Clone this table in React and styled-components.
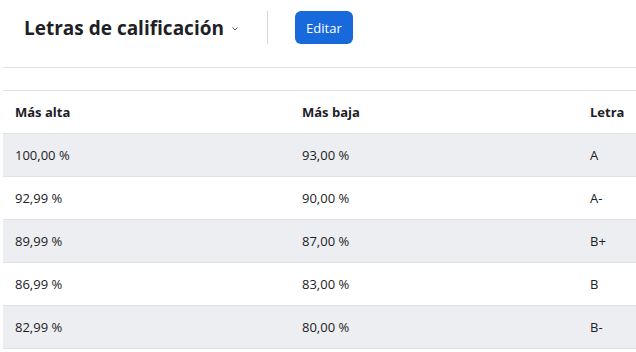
import React from 'react';
import styled, { createGlobalStyle } from 'styled-components';

const GlobalStyle = createGlobalStyle`
  body {
    margin: 0;
    background: #fff;
    font-family: "Open Sans", "Noto Sans", sans-serif;
    color: #1d2125;
  }
`;

const rows = [
  { high: '100,00 %', low: '93,00 %', letter: 'A' },
  { high: '92,99 %', low: '90,00 %', letter: 'A-' },
  { high: '89,99 %', low: '87,00 %', letter: 'B+' },
  { high: '86,99 %', low: '83,00 %', letter: 'B' },
  { high: '82,99 %', low: '80,00 %', letter: 'B-' },
];

export default function App() {
  return (
    <PageSt>
      <GlobalStyle />
      <HeaderSt>
        <TitleSt>
          Letras de calificación
          <svg width="8" height="8" viewBox="0 0 8 8">
            <path d="M1.5 2.5 L4 5 L6.5 2.5" fill="none" stroke="#495057" strokeWidth="1" />
          </svg>
        </TitleSt>
        <DividerSt />
        <ButtonSt>Editar</ButtonSt>
      </HeaderSt>
      <SpacerSt />
      <TableSt>
        <thead>
          <tr>
            <ThSt>Más alta</ThSt>
            <ThSt>Más baja</ThSt>
            <ThSt>Letra</ThSt>
          </tr>
        </thead>
        <tbody>
          {rows.map((r, i) => (
            <RowSt key={i} $striped={i % 2 === 0}>
              <TdSt>{r.high}</TdSt>
              <TdSt>{r.low}</TdSt>
              <TdSt>{r.letter}</TdSt>
            </RowSt>
          ))}
        </tbody>
      </TableSt>
    </PageSt>
  );
}

const PageSt = styled.div`
  width: 636px;
  padding-left: 3px;
  box-sizing: border-box;
`;

const HeaderSt = styled.div`
  display: flex;
  align-items: flex-start;
  height: 68px;
  padding: 11px 0 0 21px;
  box-sizing: border-box;
  border-bottom: 1px solid #dee2e6;
`;

const TitleSt = styled.h2`
  margin: 0;
  height: 33px;
  display: flex;
  align-items: center;
  gap: 7px;
  font-size: 19px;
  font-weight: 700;
  color: #1d2125;
  svg {
    margin-top: 3px;
  }
`;

const DividerSt = styled.div`
  width: 1px;
  height: 33px;
  background: #ced4da;
  margin: 0 27px 0 28px;
`;

const ButtonSt = styled.button`
  height: 33px;
  width: 58px;
  padding: 0;
  border: none;
  border-radius: 6px;
  background: #1769dc;
  color: #fff;
  font-family: inherit;
  font-size: 13px;
`;

const SpacerSt = styled.div`
  height: 22px;
`;

const TableSt = styled.table`
  width: 633px;
  table-layout: fixed;
  border-collapse: collapse;
  font-size: 13px;
  border-top: 1px solid #dee2e6;
`;

const ThSt = styled.th`
  text-align: left;
  font-weight: 700;
  height: 42px;
  padding: 0 12px;
  border-bottom: 1px solid #dee2e6;
  &:nth-child(1) { width: 263px; }
  &:nth-child(2) { width: 264px; }
  &:nth-child(3) { width: 34px; }
`;

const RowSt = styled.tr`
  background: ${({ $striped }) => ($striped ? '#eceef1' : '#fff')};
`;

const TdSt = styled.td`
  height: 42px;
  padding: 0 12px;
  border-bottom: 1px solid #dee2e6;
`;
